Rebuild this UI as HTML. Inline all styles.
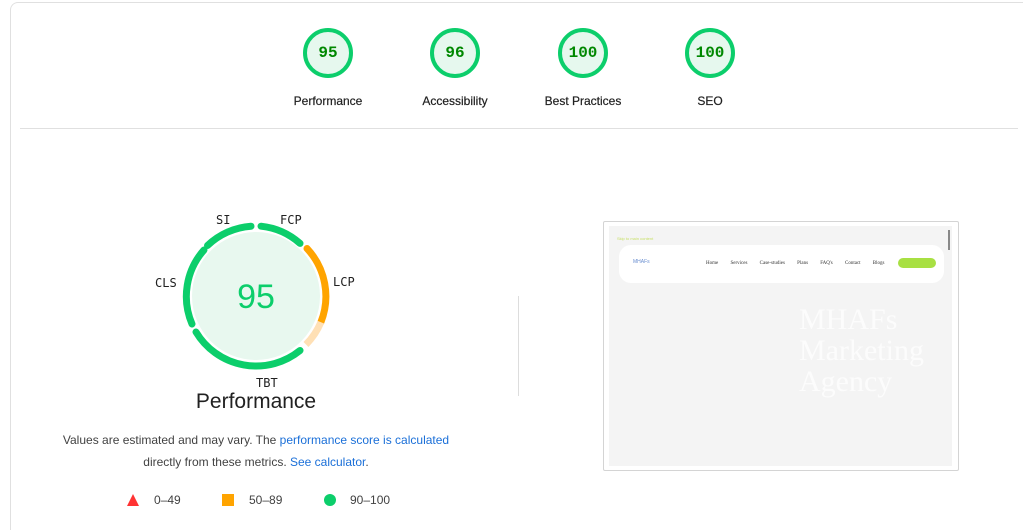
<!DOCTYPE html>
<html style="overflow:hidden;height:530px"><head><style>
body{margin:0;width:1024px;height:530px;background:#fff;font-family:"Liberation Sans",sans-serif;position:relative;overflow:hidden}
.card{position:absolute;left:10px;top:2px;width:1012px;height:527px;border:1px solid #e0e0e0;border-bottom:none;border-right:none;border-radius:8px 0 0 0}
.hr{position:absolute;left:20px;top:128px;width:998px;height:1px;background:#e0e0e0}
.g{position:absolute;top:28px;width:100px;text-align:center}
.g .n{position:absolute;left:0;width:100px;top:16px;font:bold 16px "Liberation Mono",monospace;color:#080;}
.g .l{position:absolute;top:66px;width:100px;font-size:12px;color:#212121;-webkit-text-stroke:0.2px #212121}
.lbl{position:absolute;font:12px "DejaVu Sans Mono",monospace;color:#212121}
</style></head><body>
<div class="card"></div>
<div class="hr"></div>
<svg width="1024" height="130" style="position:absolute;left:0;top:0">
<g fill="#e6f8ee" stroke="#0cce6b" stroke-width="4">
<circle cx="328" cy="53" r="23"/><circle cx="455" cy="53" r="23"/><circle cx="583" cy="53" r="23"/><circle cx="710" cy="53" r="23"/></g>
</svg>
<div class="g" style="left:278px"><div class="n">95</div><div class="l">Performance</div></div>
<div class="g" style="left:405px"><div class="n">96</div><div class="l">Accessibility</div></div>
<div class="g" style="left:533px"><div class="n">100</div><div class="l">Best Practices</div></div>
<div class="g" style="left:660px"><div class="n">100</div><div class="l">SEO</div></div>

<svg width="1024" height="530" style="position:absolute;left:0;top:0">
<circle cx="256" cy="296" r="64" fill="#e8f8ef"/>
<g fill="none" stroke-width="7" stroke-linecap="round">
<path d="M207.5 245.5 A70 70 0 0 1 251 226.2" stroke="#0cce6b"/>
<path d="M261 226.2 A70 70 0 0 1 300 243.4" stroke="#0cce6b"/>
<path d="M307 248.5 A70 70 0 0 1 320.9 322.2" stroke="#ffa400"/>
<path d="M320.9 322.2 A70 70 0 0 1 306 344.5" stroke="#ffe0b5" stroke-linecap="butt"/>
<path d="M300 350.5 A70 70 0 0 1 196 332" stroke="#0cce6b"/>
<path d="M192 324 A70 70 0 0 1 204 250" stroke="#0cce6b"/>
</g>
<text x="256" y="308" text-anchor="middle" font-family="Liberation Sans" font-size="34" fill="#0cce6b">95</text>
<line x1="518.5" y1="296" x2="518.5" y2="396" stroke="#ddd"/>
<polygon points="133,494 139,506 127,506" fill="#f33"/>
<rect x="222" y="494" width="12" height="12" fill="#ffa400"/>
<circle cx="330" cy="500" r="6" fill="#0cce6b"/>
</svg>
<div class="lbl" style="left:216px;top:213px">SI</div>
<div class="lbl" style="left:280px;top:213px">FCP</div>
<div class="lbl" style="left:333px;top:275px">LCP</div>
<div class="lbl" style="left:155px;top:276px">CLS</div>
<div class="lbl" style="left:256px;top:376px">TBT</div>
<div style="position:absolute;left:0;width:512px;text-align:center;top:390px;font-size:21px;color:#212121">Performance</div>
<div style="position:absolute;left:40px;width:432px;text-align:center;top:429px;font-size:12px;line-height:22px;color:#424242">Values are estimated and may vary. The <span style="color:#1a6fd8">performance score is calculated</span><br>directly from these metrics. <span style="color:#1a6fd8">See calculator</span>.</div>
<div style="position:absolute;left:154px;top:493px;font-size:12px;color:#424242">0–49</div>
<div style="position:absolute;left:249px;top:493px;font-size:12px;color:#424242">50–89</div>
<div style="position:absolute;left:350px;top:493px;font-size:12px;color:#424242">90–100</div>

<div style="position:absolute;left:603px;top:221px;width:354px;height:248px;border:1px solid #d4d4d4;border-radius:2px;background:#fff">
<div style="position:absolute;left:5px;top:4px;width:343px;height:240px;background:#f4f4f4">
<div style="position:absolute;left:8px;top:10px;font-size:4px;color:#c8e06a">Skip to main content</div>
<div style="position:absolute;left:10px;top:19px;width:325px;height:38px;background:#fff;border-radius:12px">
<div style="position:absolute;left:14px;top:14px;font-size:5px;color:#6a8fd0">MHAFs</div>
<div style="position:absolute;left:87px;top:16px;font:5px 'Liberation Serif',serif;color:#333;word-spacing:11px">Home Services Case-studies Plans FAQ's Contact Blogs</div>
<div style="position:absolute;left:279px;top:13px;width:38px;height:10px;border-radius:5px;background:#a8e043"></div>
</div>
<div style="position:absolute;left:190px;top:78px;font:30px/31px 'Liberation Serif',serif;color:#fcfcfc">MHAFs<br>Marketing<br>Agency</div>
<div style="position:absolute;right:2px;top:4px;width:2px;height:20px;background:#888"></div>
</div></div>
</body></html>
